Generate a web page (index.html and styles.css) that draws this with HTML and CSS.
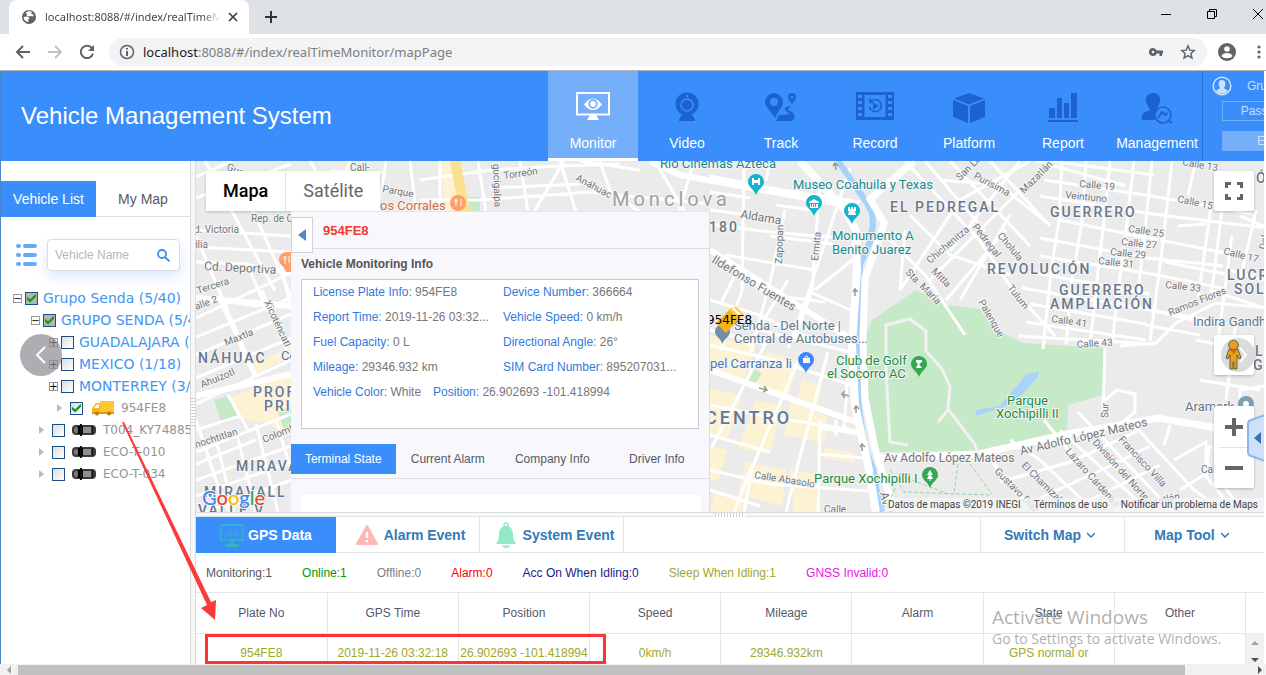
FILE: index.html
```html
<!DOCTYPE html>
<html lang="en">
<head>
<meta charset="utf-8">
<title>Vehicle Management System</title>
<link rel="stylesheet" href="styles.css">
</head>
<body>
<div class="tabstrip">
  <div class="browser-tab">
    <svg width="16" height="16" viewBox="0 0 16 16"><circle cx="8" cy="8" r="7" fill="#5f6368"/><path d="M2.500 8l3-.500 2 .600 1 1.400-1.400 1 .400 2.500-2.500-.500-1.800-2zM8 2l3 1-1 1.500 3 1.500-1 1.600-2.600-.600-2 .500-2-1 1-1.500-1.800-.500L5.500 3z" fill="#fff"/></svg>
    <span class="browser-tab-title">localhost:8088/#/index/realTimeMonitor</span>
    <button class="plain" aria-label="Close tab"><svg width="10" height="10" viewBox="0 0 10 10"><path d="M1 1l8 8M9 1l-8 8" stroke="#3c4043" stroke-width="1.7"/></svg></button>
  </div>
  <button class="plain new-tab" aria-label="New tab"><svg width="12" height="12" viewBox="0 0 12 12"><path d="M6 0v12M0 6h12" stroke="#333" stroke-width="2"/></svg></button>
  <div class="window-buttons">
    <button class="plain" aria-label="Minimize"><svg width="12" height="12"><path d="M1 6.5h10" stroke="#000"/></svg></button>
    <button class="plain" aria-label="Restore"><svg width="12" height="12" fill="none" stroke="#000"><path d="M1.500 3.500h7v7h-7zM3.500 3.500v-2h7v7h-2"/></svg></button>
    <button class="plain" aria-label="Close"><svg width="12" height="12"><path d="M1 1l10 10M11 1L1 11" stroke="#000"/></svg></button>
  </div>
</div>
<div class="toolbar">
  <button class="plain" aria-label="Back"><svg width="16" height="16" fill="none" stroke="#5f6368" stroke-width="2"><path d="M15 8H2M8 2L2 8l6 6"/></svg></button>
  <button class="plain" aria-label="Forward"><svg width="16" height="16" fill="none" stroke="#c0c2c4" stroke-width="2"><path d="M1 8h13M8 2l6 6-6 6"/></svg></button>
  <button class="plain" aria-label="Reload"><svg width="16" height="16" viewBox="0 0 16 16"><path d="M13 4.200A6.200 6.200 0 1 0 14 9.500" fill="none" stroke="#5f6368" stroke-width="2"/><path d="M15 1v6H9z" fill="#5f6368"/></svg></button>
  <div class="address">
    <svg width="16" height="16" fill="none" stroke="#5f6368" stroke-width="1.500"><circle cx="8" cy="8" r="6.500"/><path d="M8 7v5M8 4v1.600" stroke-width="2"/></svg>
    <div class="url"><b>localhost</b>:8088/#/index/realTimeMonitor/mapPage</div>
    <svg width="16" height="16" viewBox="0 0 16 16"><path fill="#5f6368" fill-rule="evenodd" d="M5 4a4 4 0 0 1 3.700 2.500H15v3h-1V12h-2.500V9.500H8.700A4 4 0 1 1 5 4zm0 2.700a1.300 1.300 0 1 0 0 2.600 1.300 1.300 0 0 0 0-2.600z"/></svg>
    <svg width="16" height="16" viewBox="0 0 16 16"><path d="M8 1.800l1.800 4.300 4.600.4-3.500 3 1.100 4.500L8 11.600 4 14l1.100-4.500-3.500-3 4.600-.4z" fill="none" stroke="#5f6368" stroke-width="1.400"/></svg>
  </div>
  <svg class="profile" width="18" height="18" viewBox="0 0 18 18"><circle cx="9" cy="9" r="9" fill="#5f6368"/><circle cx="9" cy="6" r="2.800" fill="#fff"/><path d="M3.500 13c1-4 10-4 11 0-2 3-9 3-11 0z" fill="#fff"/></svg>
  <svg class="dots" width="4" height="16" fill="#5f6368"><circle cx="2" cy="3" r="1.600"/><circle cx="2" cy="8" r="1.600"/><circle cx="2" cy="13" r="1.600"/></svg>
</div>

<div class="app">
<header class="header">
  <h1>Vehicle Management System</h1>
  <nav class="nav">
    <a href="#" class="active"><svg width="34" height="30" viewBox="0 0 34 30"><path d="M1 1h32v21.500H1z" fill="none" stroke="#fff" stroke-width="2"/><path d="M14 23h6l3 5H11z" fill="#fff"/><path d="M8 12.500q9-12 18 0-9 11-18 0z" fill="#fff"/><circle cx="17" cy="12" r="3.800" fill="none" stroke="#71adf9" stroke-width="1.800"/></svg>Monitor</a>
    <a href="#"><svg width="26" height="30" viewBox="0 0 26 30"><circle cx="13" cy="12" r="11.500" fill="#1d63cf"/><circle cx="13" cy="13" r="6" fill="none" stroke="#3a8efb" stroke-width="1.600"/><circle cx="13" cy="4" r="1.200" fill="#3a8efb"/><path d="M8 23h10l3 4v2H5v-2z" fill="#1d63cf"/></svg>Video</a>
    <a href="#"><svg width="34" height="30" viewBox="0 0 34 30" fill="#1d63cf"><path fill-rule="evenodd" d="M10 1a9 9 0 0 1 9 9c0 6-7 10-8 17C9 20 1 16 1 10a9 9 0 0 1 9-9zm0 5a4 4 0 1 0 0 8 4 4 0 0 0 0-8zM28 1a4 4 0 0 1 4 4c0 3-3 4-4 8-1-4-4-5-4-8a4 4 0 0 1 4-4zm0 2.500a1.500 1.500 0 1 0 0 3 1.500 1.500 0 0 0 0-3z"/><path d="M27 14c-8 1-8 4-3 6 3 2-1 3-9 3l-3 6h15c5-2 5-8-1-10-4-2 0-3 1-5z"/></svg>Track</a>
    <a href="#"><svg width="38" height="28" viewBox="0 0 38 28"><path d="M0 0h38v28H0z" fill="#1d63cf"/><g fill="#3a8efb"><path d="M2 3h4v3H2zM2 9h4v3H2zM2 15h4v3H2zM2 21h4v3H2zM32 3h4v3h-4zM32 9h4v3h-4zM32 15h4v3h-4zM32 21h4v3h-4zM8.500 3h21v22h-21z"/></g><path d="M14.500 10a6 6 0 1 1-1 5M14 6.500v4h4" fill="none" stroke="#1d63cf" stroke-width="1.600"/><path d="M17 10.500l6 3.500-6 3.500z" fill="#1d63cf"/></svg>Record</a>
    <a href="#"><svg width="34" height="32" viewBox="0 0 34 32" fill="#1d63cf"><path d="M17 1l15 5.500-15 6L2 6.500zM1 8l15 6v17L1 25zM33 8l-15 6v17l15-6z"/></svg>Platform</a>
    <a href="#"><svg width="30" height="30" viewBox="0 0 30 30" fill="#1d63cf"><path d="M1 16h6v10H1zM9 6h5v20H9zM16 11h5v15h-5zM23 1h6v25h-6zM0 28h30v2H0z"/></svg>Report</a>
    <a href="#"><svg width="32" height="32" viewBox="0 0 32 32"><path d="M12 1c6 0 8 5 7 9-1 3-3 5-3 7l2 2-2 9H1c-1-7 3-8 8-10 0-2-3-4-4-8-1-4 1-9 7-9z" fill="#1d63cf"/><circle cx="22" cy="23" r="8" fill="#3a8efb" stroke="#1d63cf" stroke-width="1.600"/><path d="M17 26l4-6 3 3 3-2M27 28l4 3" fill="none" stroke="#1d63cf" stroke-width="2"/></svg>Management</a>
  </nav>
  <div class="user">
    <div class="user-row"><svg width="20" height="20" viewBox="0 0 20 20"><circle cx="10" cy="10" r="8.800" fill="none" stroke="#cde2fd" stroke-width="1.500"/><path d="M10 4c3 0 4 3 3 6l-1 2c1 2 3 1 4 3-2 3-10 4-12 0 1-2 3-1 4-3l-1-2c-1-3 0-6 3-6z" fill="#cde2fd"/></svg><span>Grupo Senda</span></div>
    <button class="user-btn">Password</button>
    <button class="user-btn exit">Exit</button>
  </div>
</header>

<main class="main">
  <aside class="sidebar">
    <div class="side-tabs"><button class="active">Vehicle List</button><button>My Map</button></div>
    <div class="search-row">
      <svg width="22" height="24" fill="#68a8fb"><rect y="1" width="5" height="4" rx="2"/><rect x="7" y="1" width="14" height="4" rx="2"/><rect y="10" width="5" height="4" rx="2"/><rect x="7" y="10" width="14" height="4" rx="2"/><rect y="19" width="5" height="4" rx="2"/><rect x="7" y="19" width="14" height="4" rx="2"/></svg>
      <label class="search"><input type="text" placeholder="Vehicle Name" aria-label="Vehicle Name"><svg width="13" height="13" fill="none" stroke="#3a8efb" stroke-width="1.800"><circle cx="5" cy="5" r="4"/><path d="M8 8l4.500 4.500"/></svg></label>
    </div>
    <ul class="tree">
      <li class="l1"><button class="exp" aria-label="Collapse">−</button><label><input type="checkbox" class="part" checked>Grupo Senda (5/40)</label></li>
      <li class="l2"><button class="exp" aria-label="Collapse">−</button><label><input type="checkbox" class="part" checked>GRUPO SENDA (5/40)</label></li>
      <li class="l3"><button class="exp" aria-label="Expand">+</button><label><input type="checkbox">GUADALAJARA (1/10)</label></li>
      <li class="l3"><button class="exp" aria-label="Expand">+</button><label><input type="checkbox">MEXICO (1/18)</label></li>
      <li class="l3"><button class="exp" aria-label="Expand">+</button><label><input type="checkbox">MONTERREY (3/12)</label></li>
      <li class="unit l4"><i class="tri"></i><label><input type="checkbox" checked><svg width="22" height="16" viewBox="0 0 22 16"><path d="M8 1h14v11H8z" fill="#ffc62e"/><path d="M8 3H4L0 8v5h8z" fill="#f8b51a"/><path d="M4.500 4.500H7V8H2z" fill="#fff"/><path d="M0 12h22v2H0z" fill="#dc9b08"/><circle cx="5" cy="13.500" r="2" fill="#b57b10"/><circle cx="17" cy="13.500" r="2" fill="#b57b10"/></svg>954FE8</label></li>
      <li class="unit l3u"><i class="tri"></i><label><input type="checkbox"><svg width="24" height="12" viewBox="0 0 24 12"><use href="#car"/></svg>T004_KY74885</label></li>
      <li class="unit l3u"><i class="tri"></i><label><input type="checkbox"><svg width="24" height="12" viewBox="0 0 24 12"><use href="#car"/></svg>ECO-T-010</label></li>
      <li class="unit l3u"><i class="tri"></i><label><input type="checkbox"><svg width="24" height="12" viewBox="0 0 24 12"><g id="car"><rect y="1" width="24" height="10" rx="4" fill="#3b3b3b"/><rect x="2" y="3" width="4" height="6" rx="2" fill="#777"/><path d="M6 2h5v8H6z" fill="#000"/><rect x="11" y="3" width="8" height="6" fill="#909090"/><path d="M8 0h2v12H8zM20 2h1v8h-1z" fill="#111"/></g></svg>ECO-T-034</label></li>
    </ul>
    <button class="circle left" aria-label="Hide sidebar"><svg width="12" height="18" fill="none" stroke="#fff" stroke-width="2"><path d="M10 1L2 9l8 8"/></svg></button>
  </aside>
  <div class="vsplit"><i></i></div>

  <section class="content">
    <div class="map">
      <svg class="map-canvas" viewBox="196 161 1068 351" preserveAspectRatio="xMinYMin slice">
        <defs>
          <symbol id="pin" viewBox="0 0 16 22" overflow="visible"><path d="M8 0a8 8 0 0 1 8 8c0 5-6 7-8 13C6 15 0 13 0 8a8 8 0 0 1 8-8z"/></symbol>
        </defs>
        <rect x="196" y="161" width="1068" height="351" fill="#ebebeb"/>
        <g fill="#fdf3d3">
          <path d="M225 400L291 372V435L262 422 240 418zM250 365l41-18v10l-38 18zM440 161h20l4 51h-18z"/>
          <path d="M710 335l46 12-12 32-34-8zM765 352l34 9-10 34-34-9zM710 388l32 8-14 42-18-4zM756 400l26 6-12 48-32-6zM790 402l38 15-4 26-40-8zM710 446l18 4-10 30h-8zM746 462l40 8-4 36-44-12zM790 470l28 4v38h-24zM802 380l20 6-6 24-20-6zM824 448l30 5v10l-30-5zM715 490l32 8-6 14h-31z"/>
        </g>
        <g fill="#c6e9c8">
          <path d="M872 320l44-30 31 15 33 4 20 23 23 11 14 1 68 4-2 47-35 10-1 25-87 21-105 1-10-50v-67z"/>
          <path d="M214 400l14-4 10 22-16 6zM278 412l13-6v20l-8 2zM468 197h12v15h-10zM754 370l8 3-8 12-6-3z"/>
        </g>
        <path d="M976 410l24-4 15-18 12-14 12-3-1 6-16 17-10 10-36 12z" fill="#aad3fb"/>
        <g fill="none" stroke="#fff" stroke-width="3">
          <!-- west blocks -->
          <path d="M196 177l36-16M196 198l95-34M205 161l70 130M230 161l30 65 31 70M196 230l95 6M196 247l95 5M196 262l50 2 45 10M196 296l60 10 35-2M196 337l95-39M196 318l95-45M196 355l95-41M196 378l95-40M196 404l95-44M228 395l20 35M196 430l44-14M196 452l95-38M196 236l34 80 26 60M218 296l36 80M246 262l22 50M262 290l29 70M280 260l11 50M196 420l20 60 14 32M216 440l18 72M236 430l20 82M256 424l22 88M276 420l15 50M196 480l95-34M196 496l95-34M206 512l85-32M196 464l60-24"/>
          <!-- north strip -->
          <path d="M310 161l30 51M350 161l-10 25 30 26M330 171l56 2M386 161l-8 51M410 161l6 51M440 161v51M420 180l70-10 70-4 60-2M478 161l8 51M520 161l8 51M560 161l16 51M600 161l10 30 30 21M640 170l-60-9M420 200h60l110-8 120 12M655 161l30 51M694 161l-15 51M490 188l90-4M534 212l30-51"/>
          <!-- centre north -->
          <path d="M710 176l60 12 90 14M744 161l-2 130-22 60M710 224l60 8 70 6M725 255l90 15M770 161l-4 20M785 210l-14 68-20 74M820 181l-8 110-18 50M710 192l40 6M710 210l32 4M776 205l36 5M850 168l-40 120-22 60M770 236l62 8M756 285l14 10 55 7M815 290l40-32M815 342l-20-10 15-40 40 18M760 330l90 22M710 300l46 14 50 22M788 280l-40 66M735 275l-15 30"/>
          <!-- centre south -->
          <path d="M710 345l60 14 88 28M710 405l60 12 90 14M710 470l60 14 98 7M710 435l60 17M710 330l54 14M770 335l-58 112M802 352l-50 116-8 44M828 352l-30 112-12 48M820 420l-2 92M820 428l46 7M818 454l46 4M848 370l-4 60M836 420v16M752 466l-18 46M710 490l50 16"/>
          <!-- east grid -->
          <path d="M905 161l75 80 30 45 45 50M925 161l60 70M950 161l80 85M885 235l40 40 40 60M905 230l-5 60 60-90 70-39M930 280l90-90M946 300l60-70M960 300l50-85M990 161l60 65M1020 161l-70 90M1036 161l90 25M910 215l40 40 60 20M940 180l60 5 50 40"/>
          <path d="M1062 161l-3 60-8 50-8 78M1086 161l-4 60-10 60-6 64M1110 161l-6 60-6 50-8 74M1134 161l-8 70-8 60-6 55M1152 161l-6 60-10 90M1172 161l-10 90-12 90M1196 161l-8 34M1212 200l-14 98M1222 210l-10 80M1232 235l-14 106"/>
          <path d="M1044 180l108 16M1050 161l104 14M1040 196l112 18 114 14M1060 220l98 20M1040 238l108 20 75 8M1040 256l112 18 70 14M1030 272l120 22M1022 288l128 22 70 12M1030 304l116 20M1026 322l120 18M1018 336l134 8M1160 240l70 14M1165 262l60 12M1178 226l28-2M1150 310l60 14M1145 325l55 10M1120 346l36-3 20-20 40-20 50 5M1152 196l100 18M1240 216l24 10M1230 270l34 10M1210 290l54 18M1236 320l-10 80M1256 210l-18 80"/>
          <!-- south-east blocks -->
          <path d="M1044 420l75 92M1078 412l95 100M1105 400l12-10 18 4v18l-12 10M1134 425l60 65 30 22M1060 430l90 82M1010 440l30 20 55 52M985 452l30 40 25 20M1000 482l70-20 70-32M1040 498l70-32 40-20M1080 505l80-40M1164 445l6-20M1174 460l32-18v20l30 40M1180 490l40-25M1210 445l-5 30 20 25M1105 348l-2 62M1240 400v-10l24-4M1200 380l60 10M1196 340l30 6"/>
        </g>
        <path d="M838 161l29 42 5 10 1 12-3 17-10 23-3 80 1 57 7 46 8 20 4 24 5 20" fill="none" stroke="#a5d1fb" stroke-width="6"/>
        <g fill="none" stroke="#fff" stroke-width="8">
          <path d="M800 161l46 50 10 20 1 40-5 74 3 60 13 60 8 47"/>
          <path d="M914 161l-44 38 14 24-8 25-11 30-2 60 2 60 10 50 12 40 8 24" stroke-width="7"/>
          <path d="M650 161l30 14 176 32M710 250l146 92M710 370l146 52" stroke-width="6"/>
          <path d="M878 458l100-4 90-20 90-16 106 18" stroke-width="7"/>
          <path d="M196 298l95 8M196 396l95-22" stroke-width="6"/>
        </g>
        <path d="M455 161l10 51" stroke="#fbe08e" stroke-width="10"/>
        <path d="M886 370v-45l24-6 16 12v20l16 18 8 18-2 22 26 34 8 20M886 370l4 72 18 3M948 410l-10 12" fill="none" stroke="#f3f1f1" stroke-width="3"/>
        <path d="M890 470l14 22 86 3M912 480l36 14M958 464l-4 30M970 464l22 30M895 488l-8 20" fill="none" stroke="#9bd6a5" stroke-dasharray="4 2"/>

        <g class="street">
          <text x="382" y="192" transform="rotate(10 382 192)">Parque</text><text x="350" y="171">Call-</text>
          <text x="493" y="164" transform="rotate(88 493 164)">gucigalpa</text>
          <text x="504" y="179" transform="rotate(-8 504 179)">Torreón</text><text x="575" y="180" transform="rotate(28 575 180)">Anáhuac</text>
          <text x="226" y="169" transform="rotate(25 226 169)">Guaragua</text><text x="251" y="222">Rep. de Cuba</text>
          <text x="194" y="233">d. Victoria</text><text x="190" y="248">silia</text>
          <text x="204" y="270" class="major" transform="rotate(3 204 270)">Cd. Deportiva</text>
          <text x="198" y="294" transform="rotate(-18 198 294)">Tercera</text><text x="196" y="310" transform="rotate(-20 196 310)">alle 2</text>
          <text x="264" y="302" transform="rotate(65 264 302)">Xicoténcatl</text><text x="226" y="346" transform="rotate(-22 226 346)">Maxtla</text>
          <text x="202" y="388" transform="rotate(-22 202 388)">Ahuizotl</text><text x="196" y="448" transform="rotate(-18 196 448)">nochtitlan</text>
          <text x="264" y="443" transform="rotate(-22 264 443)">Colombia</text>
          <text x="740" y="218" class="major" transform="rotate(9 740 218)">Aldama</text>
          <text x="711" y="262" class="major" transform="rotate(31 711 262)">Ildefonso Fuentes</text>
          <text x="782" y="264" transform="rotate(-88 782 264)">Zapopan</text><text x="818" y="261" transform="rotate(-84 818 261)">Ermita</text>
          <text x="754" y="478" transform="rotate(9 754 478)">Calle Abasolo</text>
          <text x="905" y="273" transform="rotate(45 905 273)">Sta. María</text><text x="931" y="272" transform="rotate(45 931 272)">Mitla</text>
          <text x="930" y="264" transform="rotate(-40 930 264)">Chichenitza</text><text x="972" y="227" transform="rotate(52 972 227)">Pedregal</text>
          <text x="960" y="181" transform="rotate(-45 960 181)">San Luis</text><text x="973" y="178" transform="rotate(28 973 178)">Purísima</text>
          <text x="1024" y="194" transform="rotate(-45 1024 194)">Mazatlán</text><text x="997" y="236" transform="rotate(50 997 236)">Cholula</text>
          <text x="1007" y="288" transform="rotate(52 1007 288)">Tulum</text><text x="978" y="302" transform="rotate(60 978 302)">Palenque</text>
          <text x="1079" y="187" transform="rotate(5 1079 187)">Calle 19</text><text x="1065" y="198" transform="rotate(6 1065 198)">Veintiuno</text>
          <text x="1128" y="232" transform="rotate(8 1128 232)">Calle 25</text><text x="1121" y="245" transform="rotate(6 1121 245)">Calle 27</text>
          <text x="1110" y="255" transform="rotate(6 1110 255)">Calle 29</text><text x="1098" y="264" transform="rotate(6 1098 264)">Calle 31</text>
          <text x="1165" y="288" transform="rotate(6 1165 288)">Calle 33</text><text x="1051" y="322" transform="rotate(8 1051 322)">Calle 41</text>
          <text x="1077" y="348" transform="rotate(-4 1077 348)">Calle 43</text><text x="1182" y="165" transform="rotate(10 1182 165)">Calle 13</text>
          <text x="1177" y="202" transform="rotate(12 1177 202)">Calle 15</text><text x="1223" y="254" transform="rotate(14 1223 254)">Calle 17</text>
          <text x="1170" y="316" transform="rotate(-22 1170 316)">Ramos Flores</text><text x="1266" y="250" transform="rotate(-80 1266 250)">Dolores</text>
          <text x="884" y="462" class="major">Av Adolfo López Mateos</text>
          <text x="1021" y="455" class="major" transform="rotate(-13 1021 455)">Av Adolfo López Mateos</text>
          <text x="1108" y="418" transform="rotate(-88 1108 418)">Sur</text>
          <text x="1118" y="440" transform="rotate(47 1118 440)">Francisco Villa</text><text x="1092" y="443" transform="rotate(48 1092 443)">División del Norte</text>
          <text x="1065" y="452" transform="rotate(48 1065 452)">Lázaro Cárdenas</text><text x="1021" y="466" transform="rotate(45 1021 466)">El Chamizal</text>
          <text x="994" y="472" transform="rotate(45 994 472)">Gustavo Díaz O</text><text x="1201" y="473">Calle 4</text>
          <text x="880" y="493" class="major" transform="rotate(78 880 493)">Av. M</text><text x="1140" y="508" transform="rotate(-12 1140 508)">Mazatlán</text>
          <text x="824" y="513">Calle</text>
        </g>
        <g class="area">
          <text x="1050" y="217">GUERRERO</text><text x="890" y="212">EL PEDREGAL</text><text x="987" y="274">REVOLUCIÓN</text>
          <text x="1059" y="295">GUERRERO</text><text x="1050" y="309">AMPLIACIÓN</text><text x="1227" y="280">LUCRE</text><text x="1234" y="294">SOLID</text>
          <text x="1256" y="183">ÓN</text><text x="1255" y="356">LA</text><text x="1253" y="370">GU</text>
          <text x="236" y="471">MIRAVAL</text><text x="204" y="497">MIRAVALL</text><text x="198" y="515">VALLE V</text><text x="198" y="363">NÁHUAC</text>
          <text x="253" y="397">PROFE</text><text x="264" y="411">PRIV</text><text x="709" y="232">180</text>
          <text x="705" y="424" class="big">CENTRO</text><text x="612" y="206" class="city">Monclova</text>
        </g>
        <g class="poi">
          <text x="660" y="168">Río Cinemas Azteca</text><text x="793" y="189">Museo Coahuila y Texas</text><text x="832" y="240">Monumento A</text><text x="832" y="254">Benito Juarez</text>
          <g class="grey"><text x="734" y="330">Senda - Del Norte |</text><text x="734" y="343">Central de Autobuses...</text><text x="1193" y="326">Indira Gandhi</text><text x="1185" y="411">Aramark</text></g>
          <g class="green"><text x="836" y="365">Club de Golf</text><text x="827" y="378">el Socorro AC</text><text x="1007" y="405">Parque</text><text x="996" y="418">Xochipilli II</text><text x="814" y="483">Parque Xochipilli I</text></g>
          <text x="710" y="368" class="blue">pel Carranza li</text><text x="281" y="360" class="blue">Co</text><text x="380" y="210" class="orange">os Corrales</text>
        </g>
        <g fill="#12b5cb"><use href="#pin" x="748" y="174" width="16" height="22"/><use href="#pin" x="806" y="195" width="16" height="22"/><use href="#pin" x="844" y="203" width="16" height="22"/></g>
        <path d="M752 178h2v7h-2zM758 178h2v7h-2zM754 180h4v3h-4zM809 202l5-3 5 3v1h-10zM810 204h8v4h-8zM848 207h2v2h1v-2h2v2h1v-2h2v4h-1l1 4h-8l1-4h-1z" fill="#fff"/>
        <path d="M811 204h1v3h-1zM813 204h1v3h-1zM815 204h1v3h-1z" fill="#12b5cb"/>
        <use href="#pin" x="798" y="352" width="16" height="22" fill="#4285f4"/><path d="M803 358h7v5h-7z" fill="#fff"/><path d="M805 359v-2q1.500-2 3 0v2" stroke="#fff" fill="none"/>
        <g fill="#34a853"><use href="#pin" x="911" y="356" width="16" height="22"/><use href="#pin" x="922" y="467" width="16" height="22"/></g>
        <path d="M916 360h6v2l-3 2 3 4h-6l2-4-2-2zM930 470l3 5h-2l2 4h-2.500v2h-1v-2H927l2-4h-2z" fill="#fff"/>
        <use href="#pin" x="715" y="324" width="15" height="21" fill="#6e8fa4"/><circle cx="1246" cy="404" r="8" fill="#7ba0b2"/><circle cx="1246" cy="404" r="3" fill="#fff"/>
        <g fill="#ff9e67"><circle cx="458" cy="203" r="8"/><path d="M287 252a8 8 0 0 0-8 8c0 5 6 6 7 12h5v-20z"/></g><path d="M455 199v3h2v-3M456 200v6M461 199v7M284 256v3h2v-3M285 258v6M289 256v7" stroke="#fff" fill="none"/>
        <g fill="none" stroke="#999" stroke-width="1.500"><path d="M759 388l8 2M764 386l3 4-4 2M849 396l-7-2M845 391l-3 3 3 4M855 296v-6M853 292l2-3 3 3M856 413v-6M854 409l2-3 3 3M862 451v-6M860 447l2-3 3 3M836 170l-1-6M833 166l2-3 3 3"/></g>
        <path d="M716 323l15-15 10 9-15 16z" fill="#f7b416"/><path d="M729 309l7-3 8 8-4 6z" fill="#ffd15c"/><path d="M733 308l7 7" stroke="#fff" stroke-width="2"/>
        <text x="707" y="324" class="plate">954FE8</text>
        <text x="202" y="505" class="google"><tspan fill="#4285f4">G</tspan><tspan fill="#ea4335">o</tspan><tspan fill="#fbbc05">o</tspan><tspan fill="#4285f4">g</tspan><tspan fill="#34a853">l</tspan><tspan fill="#ea4335">e</tspan></text>
      </svg>

      <div class="maptype"><button class="on">Mapa</button><button>Satélite</button></div>
      <button class="mapctl full" aria-label="Full screen"><svg width="18" height="18" fill="none" stroke="#666" stroke-width="3"><path d="M1.500 6V1.500H6M12 1.500h4.500V6M16.500 12v4.500H12M6 16.500H1.500V12"/></svg></button>
      <button class="mapctl pegman" aria-label="Street View"><svg width="40" height="40"><circle cx="24" cy="20" r="17" fill="#999" opacity=".35"/><path d="M26 13l6 7-6 7" stroke="#fff" stroke-width="2" fill="none"/><g fill="#e3a21a" stroke="#4a4a4a" stroke-width=".8"><path d="M15 14h9l3 9-2 1-2-4v14h-3v-7h-1v7h-3V20l-2 4-2-1z"/><circle cx="19.500" cy="10" r="4.800"/></g><path d="M16 15h7l-3.500 4z" fill="#d8642a"/></svg></button>
      <div class="zoom"><button aria-label="Zoom in"><svg width="18" height="18"><path d="M9 0v18M0 9h18" stroke="#666" stroke-width="4"/></svg></button><button aria-label="Zoom out"><svg width="18" height="18"><path d="M0 9h18" stroke="#666" stroke-width="4"/></svg></button></div>
      <button class="handle" aria-label="Open panel"><svg width="17" height="48"><path d="M18 1L4 6Q1 7 1 10v28q0 3 3 4l14 5" fill="#cfe0fa" stroke="#8fb6f3" stroke-width="2"/><path d="M14 18v12l-7-6z" fill="#3c70b4"/></svg></button>
      <div class="attribution"><span>Datos de mapas ©2019 INEGI</span><a href="#">Términos de uso</a><a href="#">Notificar un problema de Maps</a></div>

      <div class="info">
        <div class="info-head"><button aria-label="Collapse panel"><svg width="8" height="12"><path d="M8 0v12L0 6z" fill="#5585c4"/></svg></button><strong>954FE8</strong></div>
        <h2>Vehicle Monitoring Info</h2>
        <div class="facts">
          <p><b>License Plate Info:</b> 954FE8</p><p><b>Device Number:</b> 366664</p>
          <p><b>Report Time:</b> 2019-11-26 03:32...</p><p><b>Vehicle Speed:</b> 0 km/h</p>
          <p><b>Fuel Capacity:</b> 0 L</p><p><b>Directional Angle:</b> 26°</p>
          <p><b>Mileage:</b> 29346.932 km</p><p><b>SIM Card Number:</b> 895207031...</p>
          <p class="wide"><span><b>Vehicle Color:</b> White</span><span><b>Position:</b> 26.902693 -101.418994</span></p>
        </div>
        <div class="info-tabs"><button class="active">Terminal State</button><button>Current Alarm</button><button>Company Info</button><button>Driver Info</button></div>
        <div class="info-body"></div>
      </div>
    </div>
    <div class="hsplit"><i></i></div>

    <div class="data">
      <div class="data-tabs">
        <button class="active"><svg width="24" height="24" viewBox="0 0 24 24" fill="none" stroke="#35b0c4" stroke-width="1.800"><path d="M1 2h22v15H1z"/><path d="M5 14v-3M8 14V9M11 14V6M14 14V8M17 14V6M20 14v-4" stroke-width="1.200"/><path d="M12 17v5M5 22.500h14" stroke-width="3"/></svg>GPS Data</button>
        <button><svg width="22" height="20" viewBox="0 0 22 20"><path d="M11 1l10 18H1z" fill="#ffb5b5" stroke="#ffb5b5" stroke-width="2" stroke-linejoin="round"/><path d="M11 7v6M11 15v2.500" stroke="#fff" stroke-width="2.400"/></svg>Alarm Event</button>
        <button><svg width="22" height="26" viewBox="0 0 22 26" fill="#93e8c5"><circle cx="11" cy="3" r="2" fill="none" stroke="#93e8c5" stroke-width="1.500"/><path d="M11 4c5 0 7 4 7 8 0 5 1 7 3 10H1c2-3 3-5 3-10 0-4 2-8 7-8zM7 23.500h8q-1 2.500-4 2.500t-4-2.500z"/></svg>System Event</button>
        <div class="spacer"></div>
        <button class="menu">Switch Map <svg width="8" height="6" fill="none" stroke="#337ab7" stroke-width="1.500"><path d="M0 1l4 4 4-4"/></svg></button>
        <button class="menu last">Map Tool <svg width="8" height="6" fill="none" stroke="#337ab7" stroke-width="1.500"><path d="M0 1l4 4 4-4"/></svg></button>
      </div>
      <div class="stats"><span>Monitoring:1</span><span class="s-on">Online:1</span><span class="s-off">Offline:0</span><span class="s-alarm">Alarm:0</span><span class="s-acc">Acc On When Idling:0</span><span class="s-sleep">Sleep When Idling:1</span><span class="s-gnss">GNSS Invalid:0</span></div>
      <div class="grid">
        <table>
          <thead><tr><th>Plate No</th><th>GPS Time</th><th>Position</th><th>Speed</th><th>Mileage</th><th>Alarm</th><th>State</th><th>Other</th></tr></thead>
          <tbody><tr><td>954FE8</td><td>2019-11-26 03:32:18</td><td>26.902693 -101.418994</td><td>0km/h</td><td>29346.932km</td><td></td><td>GPS normal or</td><td></td></tr></tbody>
        </table>
        <div class="vscroll"><i class="up"></i><i class="down"></i></div>
      </div>
    </div>
  </section>
</main>
</div>
<div class="hscroll"><i class="back"></i><b></b><i class="fwd"></i></div>

<div class="watermark"><strong>Activate Windows</strong><span>Go to Settings to activate Windows.</span></div>
<svg class="callout" width="620" height="675" viewBox="0 0 620 675"><path d="M122 422L207 605l-6 3 14 12 1-20-5 2L124 422z" fill="#fb3b3b"/><path d="M206.500 635.500h398v27h-398z" fill="none" stroke="#f33" stroke-width="3"/></svg>
</body>
</html>
```
FILE: styles.css
```css
* { box-sizing: border-box; }
body { margin: 0; height: 100vh; display: flex; flex-direction: column; overflow: hidden; position: relative; font: 12px/16px "Liberation Sans", Arial, sans-serif; color: #555a66; background: #fff; }
button { font: inherit; color: inherit; border: 0; background: none; padding: 0; margin: 0; }
h1, h2, p, ul { margin: 0; padding: 0; font-weight: normal; }
a { color: inherit; text-decoration: none; }
svg { flex: none; }
.plain { display: flex; align-items: center; justify-content: center; }

/* browser frame */
.tabstrip { flex: none; height: 34px; background: #dee1e6; display: flex; align-items: center; }
.browser-tab { align-self: stretch; margin-left: 9px; width: 240px; padding: 0 11px 0 12px; background: #fff; border-radius: 8px 8px 0 0; display: flex; align-items: center; gap: 8px; }
.browser-tab-title { flex: 1; overflow: hidden; white-space: nowrap; font: 12px/16px "Noto Sans", sans-serif; font-size: 11px; color: #45474a; mask-image: linear-gradient(90deg, #000 90%, transparent); }
.new-tab { margin-left: 16px; }
.window-buttons { margin-left: auto; display: flex; gap: 34px; padding: 0 2px 6px 0; }
.toolbar { flex: none; height: 37px; display: flex; align-items: center; gap: 16px; padding: 0 5px 0 15px; border-bottom: 1px solid #b4b4b8; }
.address { flex: 1; margin-left: -2px; height: 28px; border-radius: 14px; background: #f1f3f4; display: flex; align-items: center; gap: 16px; padding: 0 11px 0 10px; }
.url { flex: 1; margin-left: -8px; font: 13px/20px "Noto Sans", sans-serif; color: #7b7e82; white-space: nowrap; }
.url b { font-weight: normal; color: #222; }
.profile { margin-left: -5px; }
.dots { margin-left: 5px; }

.app { flex: 1; min-height: 0; display: flex; flex-direction: column; border-left: 1px solid #4a86d0; margin-right: 2px; }

/* header */
.header { flex: none; height: 90px; background: #3a8efb; color: #fff; display: flex; overflow: hidden; }
.header h1 { flex: 1; padding-left: 20px; font-size: 24px; line-height: 90px; white-space: nowrap; }
.nav { display: flex; gap: 4px; font-size: 14px; }
.nav a { width: 90px; display: flex; flex-direction: column; align-items: center; justify-content: space-between; padding: 21px 0 5px; line-height: 20px; border-bottom: 3px solid transparent; }
.nav a.active { background: #75aff9; border-bottom-color: #fff; }
.user { width: 62px; border-left: 1px solid #2274dc; padding: 5px 0 0 9px; color: #c9dffd; overflow: hidden; }
.user-row { display: flex; align-items: center; gap: 15px; width: 130px; white-space: nowrap; }
.user-btn { display: block; width: 90px; height: 20px; margin: 5px 0 0 10px; border: 1px solid #74adfa; }
.user-btn.exit { margin-top: 10px; background: #74adf8; }

.main { flex: 1; min-height: 0; display: flex; }

/* sidebar */
.sidebar { position: relative; width: 190px; flex: none; border-right: 1px solid #d8dade; overflow: hidden; }
.side-tabs { display: flex; margin-top: 20px; height: 36px; border-bottom: 1px solid #dcdee2; font-size: 14px; }
.side-tabs button { flex: 1; }
.side-tabs .active { flex: none; height: 36px; width: 95px; background: #3a8efb; color: #fff; }
.search-row { display: flex; align-items: center; gap: 9px; padding: 22px 10px 16px 15px; }
.search { flex: 1; min-width: 0; height: 32px; display: flex; align-items: center; padding: 0 9px 0 7px; border: 1px solid #d9dce4; border-radius: 4px; background: #fff; box-shadow: 0 6px 14px #dbe9fd; }
.search input { flex: 1; min-width: 0; width: 0; border: 0; padding: 0; outline: 0; font: inherit; }
.search input::placeholder { color: #b4b8c0; }
.tree { list-style: none; font-family: "DejaVu Sans", sans-serif; font-size: 14px; color: #4196f5; white-space: nowrap; }
.tree li { height: 22px; display: flex; align-items: center; gap: 3px; }
.tree label { display: flex; align-items: center; gap: 5px; }
.l1 { padding-left: 12px; }
.l2 { padding-left: 30px; }
.l3 { padding-left: 48px; }
.tree .unit { gap: 8px; font-size: 12px; color: #949494; }
.l4 { padding-left: 56px; }
.l3u { padding-left: 38px; }
.tree .unit label { gap: 7px; }
.l4 svg { margin-left: 2px; }
.exp { width: 9px; height: 9px; border: 1px solid #999; color: #000; font: 10px/7px "DejaVu Sans", sans-serif; display: flex; align-items: center; justify-content: center; }
.tri { border: 4px solid transparent; border-left: 5px solid #bbb; border-right: 0; }
.tree input { appearance: none; width: 13px; height: 13px; margin: 0; border: 1px solid #1d4e86; background: linear-gradient(135deg, #ddd, #fff); flex: none; }
.tree input.part { background: #b4b7b4; }
.tree input:checked::after { content: ""; display: block; width: 9px; height: 9px; margin: 1px; background: #1c9a1c; clip-path: polygon(0 35%, 35% 65%, 100% 0, 100% 35%, 35% 100%, 0 70%); }
.circle { position: absolute; left: 19px; top: 173px; width: 42px; height: 42px; border-radius: 50%; background: rgba(140, 140, 145, .7); display: flex; align-items: center; justify-content: center; }
.vsplit { width: 5px; flex: none; background: #f6f7f8; border-right: 1px solid #dadce0; display: flex; align-items: center; }
.vsplit i { width: 4px; height: 30px; background: repeating-linear-gradient(#c9ccd6 0 1px, #fff 1px 3px); }

.content { flex: 1; min-width: 0; display: flex; flex-direction: column; }

/* map */
.map { position: relative; flex: 1; min-height: 0; overflow: hidden; font-family: Roboto, sans-serif; }
.map-canvas { display: block; width: 100%; height: 100%; }
.map-canvas text { paint-order: stroke; stroke: #f6f6f6; stroke-width: 2px; }
.street { font-size: 10px; fill: #72767b; }
.street .major { font-size: 12px; }
.area { font-size: 14px; font-weight: 500; letter-spacing: 2px; fill: #69788b; }
.area .big { font-size: 18px; letter-spacing: 3px; }
.area .city { font-size: 20px; letter-spacing: 4px; fill: #9ca1a8; font-weight: 400; }
.poi { font-size: 13px; fill: #178c93; }
.poi .grey { fill: #61798c; }
.poi .green { fill: #238c3c; }
.poi .blue { fill: #4479b9; }
.poi .orange { fill: #cf6f45; }
.map-canvas .plate { font: 12px "DejaVu Sans", sans-serif; fill: #000; stroke: none; }
.google { font-family: Lato, sans-serif; font-size: 20px; font-weight: 500; }
.maptype { position: absolute; left: 10px; top: 10px; height: 40px; display: flex; font-size: 18px; background: #fff; box-shadow: 0 1px 3px rgba(0, 0, 0, .2); }
.maptype button { padding: 0 17px; color: #666; }
.maptype .on { color: #000; font-weight: 500; border-right: 1px solid #e4e4e4; }
.mapctl, .zoom { position: absolute; right: 10px; width: 40px; background: #fff; border-radius: 2px; box-shadow: 0 1px 3px rgba(0, 0, 0, .25); }
.mapctl { height: 40px; display: flex; align-items: center; justify-content: center; }
.full { top: 10px; }
.pegman { bottom: 137px; }
.zoom { bottom: 24px; display: flex; flex-direction: column; padding: 0 5px; }
.zoom button { height: 41px; display: flex; align-items: center; justify-content: center; }
.zoom button + button { border-top: 1px solid #e2e2e2; }
.handle { position: absolute; right: 0; bottom: 50px; height: 48px; }
.attribution { position: absolute; right: 0; bottom: 0; height: 14px; padding: 0 6px 0 2px; display: flex; gap: 13px; font-size: 10px; line-height: 14px; color: #444; background: rgba(245, 245, 245, .75); white-space: nowrap; }

/* vehicle panel */
.info { position: absolute; left: 95px; top: 50px; bottom: 0; width: 419px; display: flex; flex-direction: column; background: #f8f7fc; border-right: 1px solid #dcdce4; border-top: 1px solid #e4e4ea; font-family: "Liberation Sans", Arial, sans-serif; overflow: hidden; }
.info-head { flex: none; height: 37px; display: flex; gap: 10px; border-bottom: 1px solid #dddde3; }
.info-head button { width: 22px; height: 36px; margin-top: 5px; background: #fff; border: 1px solid #d0d0d8; display: flex; align-items: center; justify-content: center; flex: none; z-index: 1; }
.info-head strong { font-size: 13px; line-height: 38px; color: #ec3a2b; }
.info h2 { font-size: 12px; font-weight: bold; line-height: 16px; padding: 7px 10px; color: #555; }
.facts { flex: none; height: 150px; margin: 0 10px; padding: 0 11px; border: 1px solid #c9c9d2; background: #fff; display: grid; grid-template-columns: 190px 1fr; grid-auto-rows: 25px; line-height: 25px; color: #777; white-space: nowrap; }
.facts b { font-weight: normal; color: #3478dc; }
.facts .wide { grid-column: 1 / 3; display: flex; gap: 12px; }
.info-tabs { flex: none; height: 50px; display: grid; grid-template-columns: repeat(4, 1fr); align-items: end; padding-bottom: 4px; border-bottom: 1px solid #dddde3; }
.info-tabs button { height: 30px; }
.info-tabs .active { background: #3a8efb; color: #fff; }
.info-body { flex: 1; margin: 16px 8px 0 10px; background: #fff; }

.hsplit { flex: none; height: 5px; background: #f6f7f8; border-top: 1px solid #dadce0; border-bottom: 1px solid #e2e4e6; display: flex; justify-content: center; }
.hsplit i { width: 30px; height: 4px; background: repeating-linear-gradient(90deg, #c9ccd6 0 1px, #fff 1px 3px); }

/* data panel */
.data { flex: none; height: 147px; overflow: hidden; display: flex; flex-direction: column; }
.data-tabs { flex: none; display: flex; height: 36px; border-bottom: 1px solid #e0e2e6; font-size: 14px; font-weight: bold; color: #337ab7; }
.data-tabs button { width: 144px; display: flex; align-items: center; justify-content: center; gap: 6px; padding-left: 6px; border-right: 1px solid #e4e6ea; white-space: nowrap; }
.data-tabs .active { width: 140px; height: 36px; background: #3a8efb; color: #fff; border: 0; gap: 4px; padding: 0; }
.data-tabs .menu { border-right: 0; border-left: 1px solid #e4e6ea; padding: 0 6px 0 0; }
.data-tabs .last { width: 140px; }
.spacer { flex: 1; }
.stats { flex: none; height: 39px; display: flex; align-items: center; gap: 30px; padding-left: 10px; white-space: nowrap; }
.s-on { color: #090; }
.s-off { color: #808080; }
.s-alarm { color: #f00; }
.s-acc { color: #1a1a90; }
.s-sleep { color: #a0a82c; }
.s-gnss { color: #e815e8; }
.grid { flex: 1; min-height: 0; display: flex; overflow: hidden; border-top: 1px solid #e6e6ea; }
.grid table { flex: 1; width: 100%; height: 80px; border-collapse: collapse; table-layout: fixed; }
.grid th, .grid td { height: 40px; padding: 0; font-weight: normal; text-align: center; white-space: nowrap; border-right: 1px solid #e6e6ea; border-bottom: 1px solid #e6e6ea; }
.grid td { color: #a0a829; }
.vscroll { width: 18px; flex: none; margin-top: 40px; background: #f1f1f1; display: flex; flex-direction: column; justify-content: space-between; align-items: center; padding: 8px 0 2px; }
.up, .down { border: 4px solid transparent; }
.up { border-bottom-color: #a0a0a0; border-top: 0; }
.down { border-top-color: #505050; border-bottom: 0; }
.hscroll { flex: none; height: 11px; background: #f1f1f1; display: flex; align-items: center; padding: 0 4px 0 7px; }
.hscroll b { flex: none; width: 93%; height: 10px; margin-left: 7px; background: #c1c1c1; }
.back, .fwd { border: 4px solid transparent; }
.back { border-right-color: #a0a0a0; border-left: 0; }
.fwd { border-left-color: #505050; border-right: 0; margin-left: auto; }

.watermark { position: absolute; left: 992px; bottom: 26px; display: flex; flex-direction: column; font-family: "Open Sans", sans-serif; color: rgba(140, 140, 140, .7); pointer-events: none; white-space: nowrap; }
.watermark strong { font-size: 19px; line-height: 24px; font-weight: normal; }
.watermark span { font-size: 14px; line-height: 20px; }
.callout { position: absolute; left: 0; top: 0; pointer-events: none; }
```
